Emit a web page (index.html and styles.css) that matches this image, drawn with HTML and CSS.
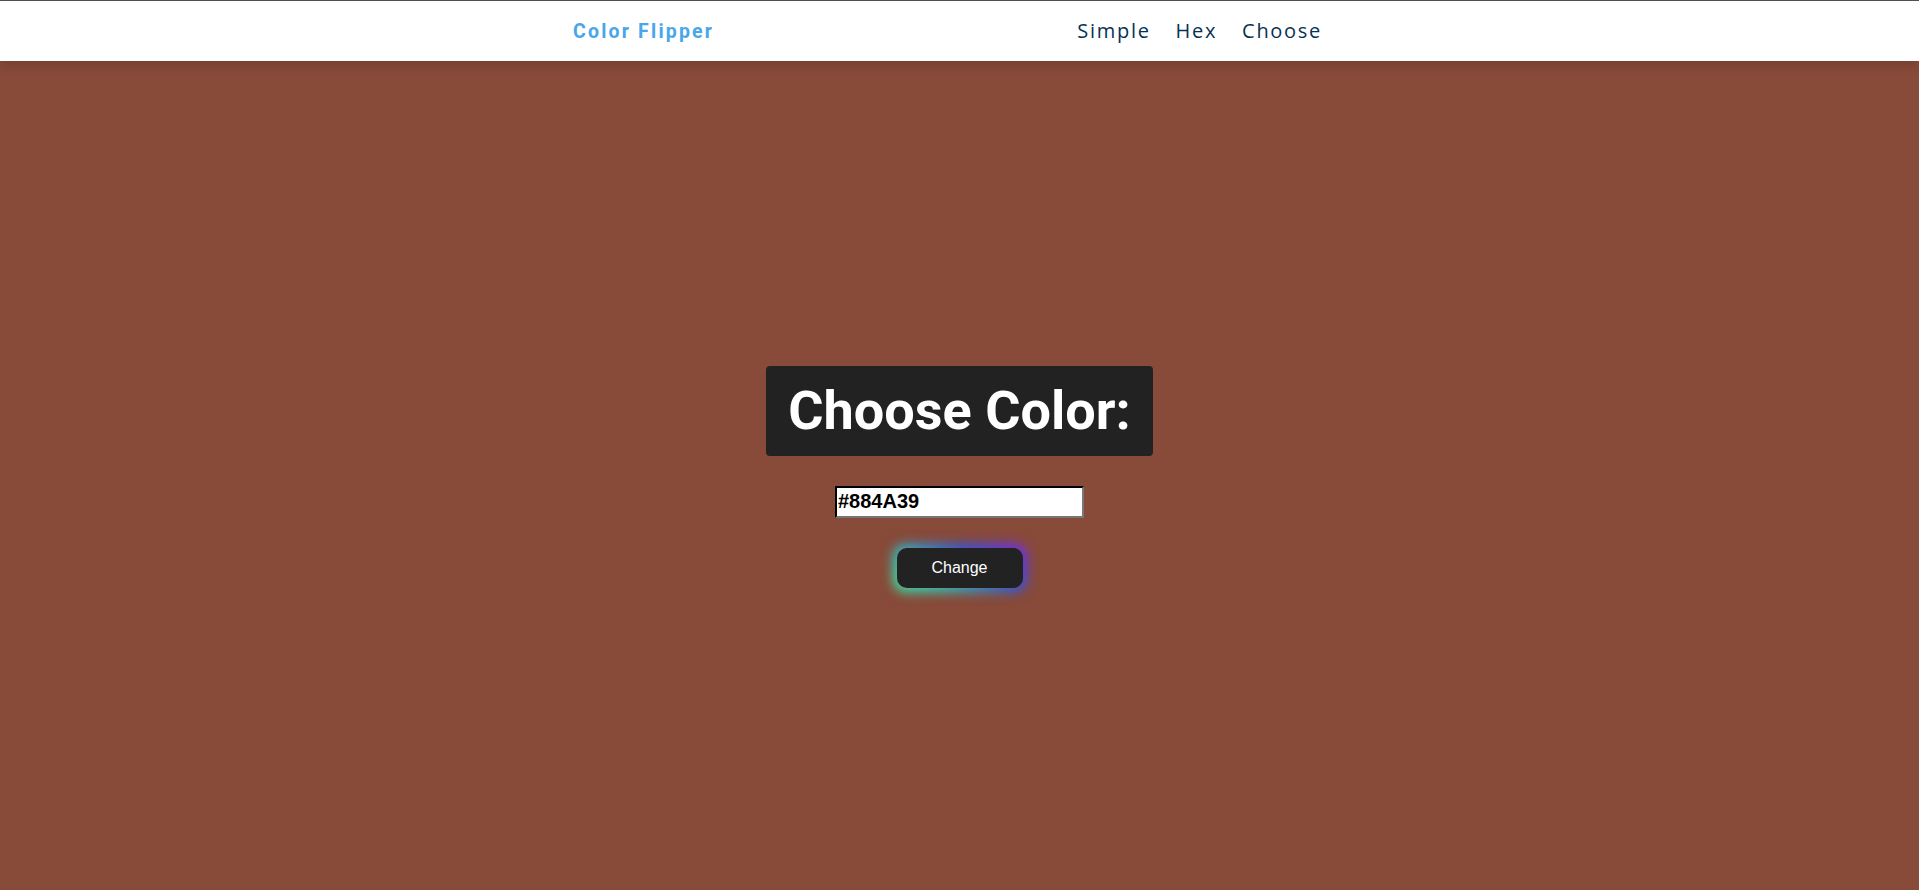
FILE: index.html
```html
<!DOCTYPE html>
<html lang="en">
<head>
<meta charset="UTF-8">
<title>Color Flipper</title>
<link rel="stylesheet" href="styles.css">
</head>
<body>
<nav class="nav">
  <div class="nav-center">
    <h4 class="logo">Color Flipper</h4>
    <ul class="nav-links">
      <li><a href="#">Simple</a></li>
      <li><a href="#">Hex</a></li>
      <li><a href="#">Choose</a></li>
    </ul>
  </div>
</nav>
<main class="main">
  <h2 class="title">Choose Color:</h2>
  <input class="color-input" type="text" value="#884A39">
  <button class="btn">Change</button>
</main>
</body>
</html>
```
FILE: styles.css
```css
* { box-sizing: border-box; }
html, body { margin: 0; padding: 0; }
body {
  background: #884a39;
  border-top: 1px solid #505050;
  min-height: 100vh;
  font-family: "Liberation Sans", Arial, sans-serif;
  overflow: hidden;
}
.nav {
  background: #fff;
  height: 60px;
  box-shadow: 0 4px 10px rgba(0, 0, 0, 0.15);
  position: relative;
  z-index: 2;
}
.nav-center {
  width: 773px;
  margin: 0 auto;
  height: 100%;
  display: flex;
  justify-content: space-between;
  align-items: center;
}
.logo {
  margin: 0;
  font-family: Roboto, sans-serif;
  font-weight: 700;
  font-size: 19.5px;
  letter-spacing: 2.2px;
  color: #49a6e9;
}
.nav-links {
  display: flex;
  gap: 25px;
  list-style: none;
  margin: 0 0 2px;
  padding: 0 24px 0 0;
}
.nav-links a {
  font-family: "Open Sans", sans-serif;
  font-size: 20px;
  font-weight: 500;
  letter-spacing: 1.7px;
  color: #063251;
  text-decoration: none;
}
.main {
  min-height: calc(100vh - 61px);
  display: flex;
  flex-direction: column;
  align-items: center;
  justify-content: center;
  gap: 30px;
  padding-top: 2px;
}
.title {
  margin: 0;
  background: #222;
  color: #fff;
  font-family: Roboto, sans-serif;
  font-weight: 700;
  font-size: 54px;
  letter-spacing: 0;
  height: 90px;
  line-height: 90px;
  padding: 0 22px;
  border-radius: 4px;
}
.color-input {
  width: 249px;
  height: 32px;
  border: 2px inset #767676;
  border-color: #222 #777 #777 #222;
  padding: 0 1px;
  font-family: "Liberation Sans", Arial, sans-serif;
  font-size: 20px;
  font-weight: 700;
  color: #000;
  background: #fff;
}
.btn {
  position: relative;
  width: 126px;
  height: 40px;
  border: none;
  border-radius: 10px;
  background: #222;
  color: #fff;
  font-family: "Liberation Sans", Arial, sans-serif;
  font-size: 16px;
  cursor: pointer;
  isolation: isolate;
}
.btn::before {
  content: "";
  position: absolute;
  inset: -4px;
  border-radius: 13px;
  background: linear-gradient(35deg, #3cf0a0 0%, #30c0c0 30%, #2f55e0 65%, #8020f0 100%);
  filter: blur(6px);
  z-index: -1;
}
.btn::after {
  content: "";
  position: absolute;
  inset: 0;
  border-radius: 10px;
  background: #222;
  z-index: -1;
}
```
